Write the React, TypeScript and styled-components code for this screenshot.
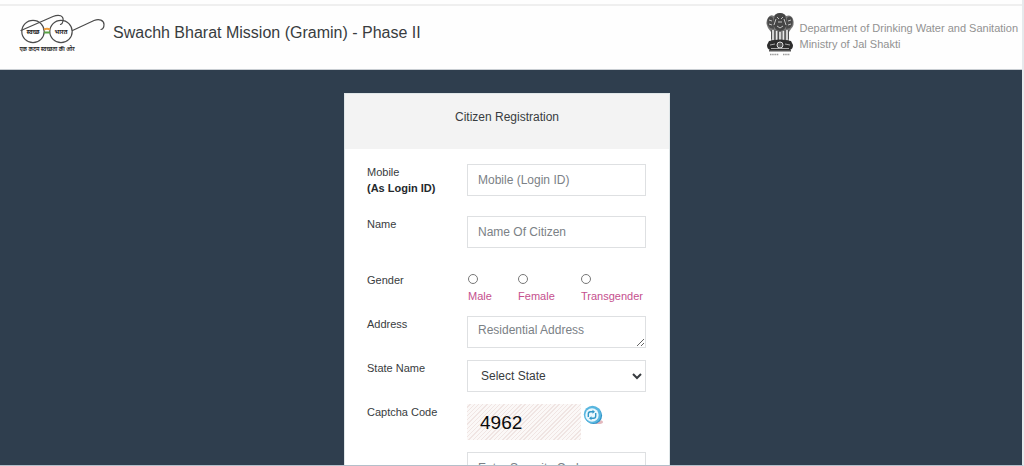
import React from "react";
import styled, { createGlobalStyle } from "styled-components";

const GlobalStyle = createGlobalStyle`
  *, *::before, *::after { box-sizing: border-box; }
  html, body { margin: 0; }
  body {
    font-family: "Liberation Sans", Arial, "Noto Sans", sans-serif;
    font-size: 11px;
    line-height: 16px;
    color: #383c40;
    background: #fefefe;
  }
  input, select, textarea, button { font: inherit; margin: 0; }
`;

const Page = styled.div`
  display: flex;
  flex-direction: column;
  height: 100vh;
  overflow: hidden;
  padding-top: 4px;
  border-right: 2px solid #e6e9ec;
  border-bottom: 1px solid #b4bfca;
`;

const Header = styled.header`
  display: flex;
  flex: none;
  align-items: flex-start;
  height: 66px;
  padding: 6px 4px 0 17px;
  border-top: 2px solid #efefef;
  border-bottom: 1px solid #c8cdd2;
`;

const MissionLogo = styled.svg`
  flex: none;
  width: 88px;
  height: 44px;
`;

const Title = styled.h1`
  flex: 1;
  margin: 11px 0 0 8px;
  font-size: 16px;
  line-height: 20px;
  font-weight: 400;
`;

const Emblem = styled.svg`
  flex: none;
  width: 30px;
  height: 46px;
  margin-right: 5px;
`;

const Department = styled.p`
  margin: 8px 0 0;
  color: #929292;
`;

const Main = styled.main`
  flex: 1;
  min-height: 0;
  overflow: hidden;
  padding: 23px 8px 0 0;
  background: #2f3e4e;
`;

const Card = styled.section`
  width: 100%;
  max-width: 326px;
  margin: 0 auto;
  padding-bottom: 24px;
  border: 1px solid #dfe6e8;
  background: #fff;
`;

const CardTitle = styled.h2`
  height: 55px;
  margin: 0;
  padding-top: 15px;
  background: #f3f3f3;
  font-size: 12px;
  font-weight: 400;
  text-align: center;
`;

const Form = styled.form`
  padding: 15px 23px 0 22px;
`;

const Row = styled.div<{ $gap?: number }>`
  display: grid;
  grid-template-columns: 100px 1fr;
  align-items: start;
  margin-bottom: ${({ $gap = 12 }) => $gap}px;
`;

const Label = styled.label`
  display: block;
`;

const Strong = styled.b`
  display: block;
  color: #24282c;
`;

const Field = styled.input`
  width: 100%;
  height: 32px;
  padding: 0 10px;
  border: 1px solid #dee0e2;
  border-radius: 0;
  background: #fff;
  && { font-size: 12px; }
  &::placeholder { color: #7b8186; opacity: 1; }
`;

const Area = styled(Field).attrs({ as: "textarea" })`
  display: block;
  padding: 5px 10px;
  overflow: hidden;
  resize: vertical;
`;

const Select = styled.select`
  width: 100%;
  height: 32px;
  padding: 0 2px 0 9px;
  border: 1px solid #dee0e2;
  border-radius: 0;
  background: #fff;
  color: #383c40;
  && { font-size: 12px; }
`;

const Choices = styled.div`
  display: flex;
  justify-content: space-between;
  padding: 0 3px 0 1px;
`;

const Choice = styled.label`
  display: flex;
  flex-direction: column;
  align-items: flex-start;
  gap: 4px;
  color: #c5508e;
`;

const Radio = styled.input`
  appearance: none;
  width: 10px;
  height: 10px;
  && { margin: 2px 0 0; }
  border: 1px solid #777;
  border-radius: 50%;
  background: #fff;
  &:checked { background: #c5508e; box-shadow: inset 0 0 0 2px #fff; }
`;

const CaptchaLine = styled.div`
  display: flex;
  align-items: flex-start;
  gap: 2px;
`;

const Captcha = styled.output`
  width: 114px;
  height: 36px;
  padding-left: 13px;
  background: repeating-linear-gradient(135deg, #fbf8f7 0 2px, #f0e5e3 2px 3px);
  color: #0a0a0a;
  font-size: 19px;
  line-height: 38px;
`;

const Refresh = styled.button`
  display: flex;
  padding: 1px 0 0;
  border: 0;
  background: none;
`;

const genders = ["Male", "Female", "Transgender"];

function Glasses() {
  return (
    <MissionLogo viewBox="0 0 88 44" role="img" aria-label="Swachh Bharat">
      <g fill="none" stroke="#4b4b4b" strokeWidth="1.2" strokeLinecap="round">
        <circle cx="16" cy="19.500" r="11.200" fill="#fff" />
        <circle cx="44" cy="19.500" r="11.200" fill="#fff" />
        <path d="M4 18.500 L36 4.500 C42 2 47 3.500 46 9 C45.700 11 45 12 43.500 12.500" />
        <path d="M55.500 18.500 L77 8.500 C82 6.500 87 8 87 12.500 C87 15 86 17 84 17.500" />
      </g>
      <path d="M27 17.500 Q30 16 33 17.500" stroke="#ee9d3c" strokeWidth="2" fill="none" />
      <path d="M27 20.500 H33" stroke="#59a345" strokeWidth="2" />
      <g fill="#222" fontFamily="'Noto Sans', 'Noto Sans Devanagari', sans-serif" fontWeight="700" textAnchor="middle">
        <text x="16" y="22" fontSize="6">स्वच्छ</text>
        <text x="44" y="22" fontSize="6">भारत</text>
        <text x="30" y="38.500" fontSize="5.500" fontWeight="600">एक कदम स्वच्छता की ओर</text>
      </g>
    </MissionLogo>
  );
}

function LionCapital() {
  return (
    <Emblem viewBox="0 0 30 46" role="img" aria-label="State Emblem of India">
      <path d="M9 4 Q11 1 15 1 Q19 1 21 4 Q26 2 28 7 Q30 13 26 17 L24 20 L24 29 L6 29 L6 20 L3 16 Q0 10 3 6 Q5 2 9 4Z" fill="#777" />
      <path d="M10 3 Q15 -1 20 3 L22 11 Q21 18 15 19 Q9 18 8 11Z" fill="#444" />
      <path d="M3 6 Q6 3 8 6 L9 17 L5 16 Q1 12 3 6Z M27 6 Q24 3 22 6 L21 17 L25 16 Q29 12 27 6Z" fill="#4a4a4a" />
      <path d="M12 5 L14 7 M18 5 L16 7 M13 10 H17 M11 7 L9 13 M19 7 L21 13 M12 14 L15 16 L18 14 M4 8 L7 9 M26 8 L23 9 M4 12 L7 13 M26 12 L23 13" stroke="#c2c2c2" strokeWidth="1" fill="none" />
      <path d="M8 18 V28 M11.500 19 V29 M15 20 V29 M18.500 19 V29 M22 18 V28" stroke="#e8e8e8" strokeWidth="1.600" />
      <path d="M6.500 18 V27 M10 18 V28 M13.500 19 V29 M20 18 V28 M23.500 18 V27" stroke="#444" strokeWidth=".8" />
      <path d="M4 29 Q15 26 26 29 L28 33 Q28 37 25 38 H5 Q2 37 2 33Z" fill="#2c2c2c" />
      <circle cx="15" cy="33" r="3" fill="#555" stroke="#ddd" strokeWidth="1" />
      <path d="M5 33 L10 32 M20 32 L25 33 M6 36.500 H24" stroke="#aaa" strokeWidth="1" />
      <path d="M4 38 H26 V39.500 H4Z" fill="#555" />
      <path d="M5 42.500 H14 M18 42.500 H25" stroke="#999" strokeWidth="1.500" strokeDasharray="1.500 .7" />
    </Emblem>
  );
}

function RefreshIcon() {
  return (
    <svg width="20" height="20" viewBox="0 0 20 20" aria-hidden="true">
      <ellipse cx="15" cy="17" rx="5" ry="2" fill="#e3b8bd" />
      <circle cx="10.500" cy="10.500" r="8.600" fill="#2f94c8" />
      <circle cx="9.500" cy="9.500" r="8.700" fill="#58b6df" />
      <circle cx="9" cy="10" r="6.700" fill="#e9f7fd" />
      <g fill="none" stroke="#3298c8" strokeWidth="1.400">
        <path d="M5.300 12 V9 Q5.300 6.800 7.500 6.800 H10" />
        <path d="M12.700 8 V11 Q12.700 13.200 10.500 13.200 H8" />
      </g>
      <path d="M9.500 4.800 L12 6.800 L9.500 8.800Z M8.500 11.200 L6 13.200 L8.500 15.200Z" fill="#3298c8" />
    </svg>
  );
}

export default function App() {
  return (
    <>
      <GlobalStyle />
      <Page>
        <Header>
          <Glasses />
          <Title>Swachh Bharat Mission (Gramin) - Phase II</Title>
          <LionCapital />
          <Department>
            Department of Drinking Water and Sanitation
            <br />
            Ministry of Jal Shakti
          </Department>
        </Header>
        <Main>
          <Card>
            <CardTitle>Citizen Registration</CardTitle>
            <Form>
              <Row $gap={20}>
                <Label htmlFor="mobile">
                  Mobile <Strong>(As Login ID)</Strong>
                </Label>
                <Field id="mobile" type="tel" placeholder="Mobile (Login ID)" />
              </Row>
              <Row $gap={24}>
                <Label htmlFor="name">Name</Label>
                <Field id="name" type="text" placeholder="Name Of Citizen" />
              </Row>
              <Row role="radiogroup" aria-labelledby="gender">
                <span id="gender">Gender</span>
                <Choices>
                  {genders.map((gender) => (
                    <Choice key={gender}>
                      <Radio type="radio" name="gender" value={gender} />
                      {gender}
                    </Choice>
                  ))}
                </Choices>
              </Row>
              <Row>
                <Label htmlFor="address">Address</Label>
                <Area id="address" placeholder="Residential Address" />
              </Row>
              <Row>
                <Label htmlFor="state">State Name</Label>
                <Select id="state">
                  <option>Select State</option>
                </Select>
              </Row>
              <Row>
                <Label htmlFor="code">Captcha Code</Label>
                <CaptchaLine>
                  <Captcha>4962</Captcha>
                  <Refresh type="button" aria-label="Refresh captcha">
                    <RefreshIcon />
                  </Refresh>
                </CaptchaLine>
              </Row>
              <Row>
                <span />
                <Field id="code" type="text" aria-label="Security code" placeholder="Enter Security Code" />
              </Row>
            </Form>
          </Card>
        </Main>
      </Page>
    </>
  );
}
